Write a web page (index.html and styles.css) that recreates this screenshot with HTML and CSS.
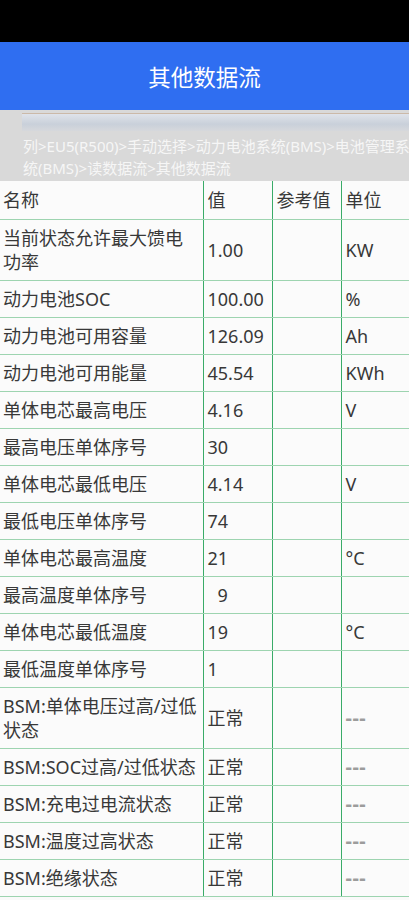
FILE: index.html
```html
<!DOCTYPE html>
<html lang="zh">
<head>
<meta charset="utf-8">
<link rel="stylesheet" href="styles.css">
</head>
<body>
<div class="status"></div>
<header class="appbar"><h1>其他数据流</h1></header>
<section class="crumbs">
  <div class="strip"></div>
  <p class="path">列&gt;EU5(R500)&gt;手动选择&gt;动力电池系统(BMS)&gt;电池管理系<br>统(BMS)&gt;读数据流&gt;其他数据流</p>
</section>
<table class="grid">
  <colgroup><col class="c1"><col class="c2"><col class="c3"><col class="c4"></colgroup>
  <thead>
    <tr><th>名称</th><th>值</th><th>参考值</th><th>单位</th></tr>
  </thead>
  <tbody>
    <tr class="tall"><td>当前状态允许最大馈电功率</td><td>1.00</td><td></td><td>KW</td></tr>
    <tr><td>动力电池SOC</td><td>100.00</td><td></td><td>%</td></tr>
    <tr><td>动力电池可用容量</td><td>126.09</td><td></td><td>Ah</td></tr>
    <tr><td>动力电池可用能量</td><td>45.54</td><td></td><td>KWh</td></tr>
    <tr><td>单体电芯最高电压</td><td>4.16</td><td></td><td>V</td></tr>
    <tr><td>最高电压单体序号</td><td>30</td><td></td><td></td></tr>
    <tr><td>单体电芯最低电压</td><td>4.14</td><td></td><td>V</td></tr>
    <tr><td>最低电压单体序号</td><td>74</td><td></td><td></td></tr>
    <tr><td>单体电芯最高温度</td><td>21</td><td></td><td>°C</td></tr>
    <tr><td>最高温度单体序号</td><td class="pad">9</td><td></td><td></td></tr>
    <tr><td>单体电芯最低温度</td><td>19</td><td></td><td>°C</td></tr>
    <tr><td>最低温度单体序号</td><td>1</td><td></td><td></td></tr>
    <tr class="tall"><td>BSM:单体电压过高/过低状态</td><td>正常</td><td></td><td class="dash">---</td></tr>
    <tr><td>BSM:SOC过高/过低状态</td><td>正常</td><td></td><td class="dash">---</td></tr>
    <tr><td>BSM:充电过电流状态</td><td>正常</td><td></td><td class="dash">---</td></tr>
    <tr><td>BSM:温度过高状态</td><td>正常</td><td></td><td class="dash">---</td></tr>
    <tr><td>BSM:绝缘状态</td><td>正常</td><td></td><td class="dash">---</td></tr>
  </tbody>
</table>
</body>
</html>
```
FILE: styles.css
```css
html, body {
  margin: 0;
  padding: 0;
  background: #fafafa;
  font-family: "Noto Sans", "Noto Sans CJK SC", sans-serif;
}
.status {
  height: 42px;
  background: #000;
}
.appbar {
  height: 68px;
  background: #2f6ef1;
  display: flex;
  align-items: center;
  justify-content: center;
}
.appbar h1 {
  margin: 0;
  color: #fff;
  font-size: 22.5px;
  font-weight: 400;
}
.crumbs {
  background: #d9d9d9;
  height: 71px;
  padding-top: 3px;
  box-sizing: border-box;
}
.strip {
  margin-left: 22px;
  height: 17px;
  border-top: 1.5px solid #cbb9a8;
  background: linear-gradient(180deg, #dfe3ea 0%, #c9d0da 60%, #d6d8dc 100%);
}
.path {
  margin: 4px 0 0 23px;
  color: #f6f6f6;
  font-size: 15px;
  line-height: 22px;
  white-space: nowrap;
  overflow: hidden;
}
.grid {
  width: 409px;
  border-collapse: collapse;
  table-layout: fixed;
  color: #383838;
  font-size: 18px;
  background: #fbfbfb;
}
.c1 { width: 203px; }
.c2 { width: 69px; }
.c3 { width: 69px; }
.c4 { width: 68px; }
.grid th, .grid td {
  text-align: left;
  font-weight: 400;
  padding: 6px 3px 6px 4px;
  line-height: 24px;
  vertical-align: middle;
  border-left: 1.5px solid #3aab68;
  border-bottom: 1.5px solid #9dd4b0;
  overflow: hidden;
}
.grid th { padding-top: 7px; padding-bottom: 7px; }
.grid th:first-child, .grid td:first-child {
  border-left: none;
  padding-left: 3px;
}
.grid td.pad { padding-left: 14px; }
.grid td.dash {
  color: #9c9c9c;
  font-size: 20px;
  font-weight: 700;
  letter-spacing: 0.5px;
}
```
